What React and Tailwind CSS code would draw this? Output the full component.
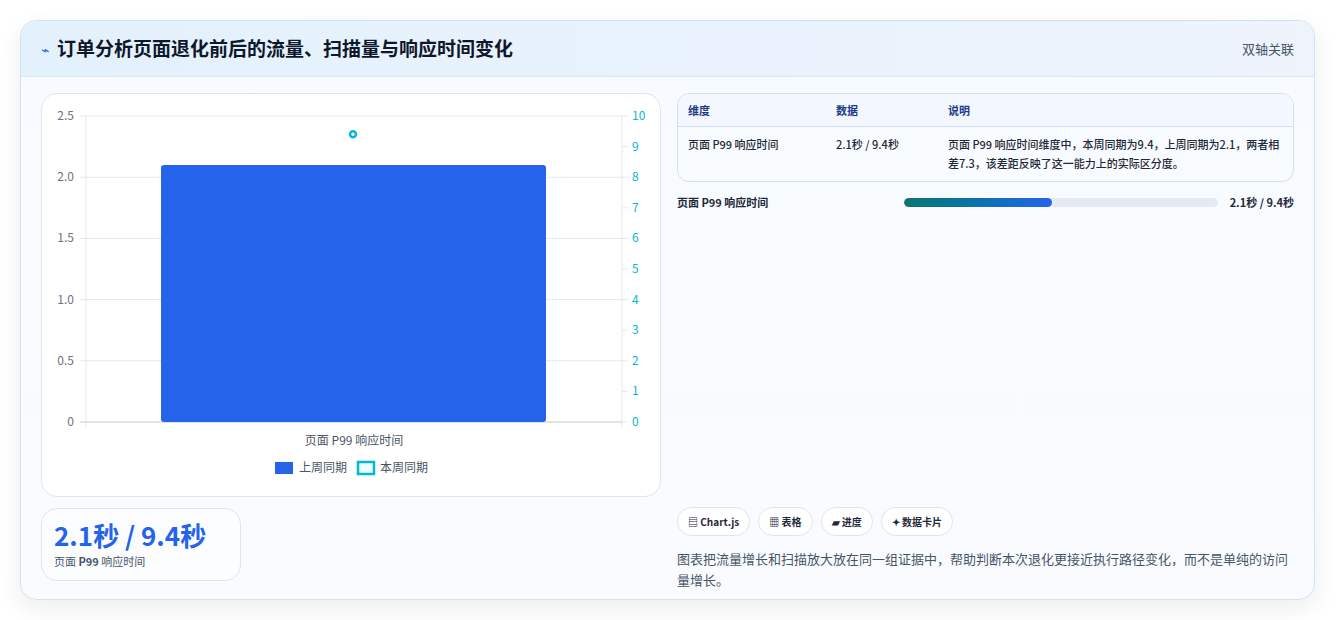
import React from 'react';

const font = { fontFamily: '"Noto Sans CJK SC", "Noto Sans", sans-serif' };

const leftTicks = ['2.5', '2.0', '1.5', '1.0', '0.5', '0'];
const rightTicks = [10, 9, 8, 7, 6, 5, 4, 3, 2, 1, 0];

function Chart() {
    const top = 115;
    const bottom = 421;
    const h = bottom - top;
    return (
        <svg viewBox="40 93 620 403" width="620" height="403" className="block">
            {leftTicks.map((t, i) => {
                const y = top + (h / 5) * i;
                return (
                    <g key={t}>
                        <line x1="78" x2="620" y1={y} y2={y} stroke="#e5e7eb" strokeWidth="1" />
                        <text x="72" y={y + 4} textAnchor="end" fontSize="12" fill="#6b7280">{t}</text>
                    </g>
                );
            })}
            {rightTicks.map((t, i) => {
                const y = top + (h / 10) * i;
                return (
                    <g key={t}>
                        <line x1="620" x2="626" y1={y} y2={y} stroke="#e5e7eb" />
                        <text x="630" y={y + 4} fontSize="12" fill="#06b6d4">{t}</text>
                    </g>
                );
            })}
            <line x1="84" x2="84" y1={top} y2={bottom + 6} stroke="#e5e7eb" />
            <line x1="620" x2="620" y1={top} y2={bottom + 6} stroke="#e5e7eb" />
            <line x1="78" x2="620" y1={bottom} y2={bottom} stroke="#d1d5db" />
            <rect x="159" y={bottom - h * 0.84} width="385" height={h * 0.84} rx="3" fill="#2563eb" />
            <circle cx="351" cy={bottom - h * 0.94} r="3" fill="#ecfeff" stroke="#06b6d4" strokeWidth="2.5" />
            <text x="352" y="444" textAnchor="middle" fontSize="12" fill="#4b5563">页面 P99 响应时间</text>
            <rect x="273" y="461" width="18" height="12" fill="#2563eb" />
            <text x="297" y="471" fontSize="12" fill="#4b5563">上周同期</text>
            <rect x="356" y="461" width="16" height="12" fill="#ecfeff" stroke="#06b6d4" strokeWidth="2.5" />
            <text x="378" y="471" fontSize="12" fill="#4b5563">本周同期</text>
        </svg>
    );
}

const chips = ['▤ Chart.js', '▦ 表格', '▰ 进度', '✦ 数据卡片'];

export default function App() {
    return (
        <div className="w-[1336px] h-[620px] bg-white pt-5 pl-5" style={font}>
            <div className="w-[1295px] h-[580px] rounded-2xl border border-[#cfe3f3] bg-gradient-to-b from-[#f7fbff] to-[#f9fbfe] shadow-[0_8px_24px_rgba(15,23,42,0.08)] overflow-hidden">
                <div className="h-[56px] flex items-center justify-between px-5 bg-gradient-to-r from-[#e3f1fd] to-[#eef3fc] border-b border-[#dbe8f5]">
                    <div className="flex items-center gap-2">
                        <span className="text-[#2563eb] text-sm">⌁</span>
                        <h1 className="text-[19px] font-bold text-[#0f172a]">订单分析页面退化前后的流量、扫描量与响应时间变化</h1>
                    </div>
                    <span className="text-[13px] text-[#475569]">双轴关联</span>
                </div>
                <div className="flex gap-4 px-5 pt-4">
                    <div className="w-[620px] flex flex-col gap-[11px]">
                        <div className="h-[404px] rounded-2xl border border-[#dbe6f2] bg-white overflow-hidden">
                            <Chart />
                        </div>
                        <div className="w-[200px] h-[73px] rounded-2xl border border-[#dbe6f2] bg-[#fbfdff] px-3 pt-2">
                            <div className="text-[26px] font-bold text-[#2563eb] leading-9">2.1秒 / 9.4秒</div>
                            <div className="text-[11px] text-[#475569]">页面 <b>P99</b> 响应时间</div>
                        </div>
                    </div>
                    <div className="w-[620px] flex flex-col">
                        <div className="rounded-xl border border-[#d3dfec] bg-[#f8fbff] overflow-hidden text-[11px]">
                            <div className="grid grid-cols-[148px_112px_1fr] h-[33px] items-center px-2.5 font-semibold text-[#1e3a8a] border-b border-[#d3dfec] bg-[#f3f8fe]">
                                <span>维度</span><span>数据</span><span>说明</span>
                            </div>
                            <div className="grid grid-cols-[148px_112px_1fr] px-2.5 py-2 text-[#1f2937] font-medium leading-[19px]">
                                <span>页面 P99 响应时间</span>
                                <span>2.1秒 / 9.4秒</span>
                                <span>页面 P99 响应时间维度中，本周同期为9.4，上周同期为2.1，两者相差7.3，该差距反映了这一能力上的实际区分度。</span>
                            </div>
                        </div>
                        <div className="flex items-center mt-[12px] text-[11px] font-semibold text-[#1f2937]">
                            <span className="w-[227px]">页面 P99 响应时间</span>
                            <div className="w-[314px] h-[9px] rounded-full bg-[#e5e9f2] overflow-hidden">
                                <div className="h-full rounded-full bg-gradient-to-r from-[#0f766e] to-[#2563eb]" style={{ width: '47%' }} />
                            </div>
                            <span className="ml-auto">2.1秒 / 9.4秒</span>
                        </div>
                        <div className="flex gap-2 mt-[296px]">
                            {chips.map((c) => (
                                <span key={c} className="h-[29px] px-2.5 flex items-center rounded-full border border-[#dbe6f2] bg-white text-[10px] font-semibold text-[#1f2937]">{c}</span>
                            ))}
                        </div>
                        <p className="mt-[12px] text-[13px] leading-[21px] text-[#475569]">图表把流量增长和扫描放大放在同一组证据中，帮助判断本次退化更接近执行路径变化，而不是单纯的访问量增长。</p>
                    </div>
                </div>
            </div>
        </div>
    );
}
